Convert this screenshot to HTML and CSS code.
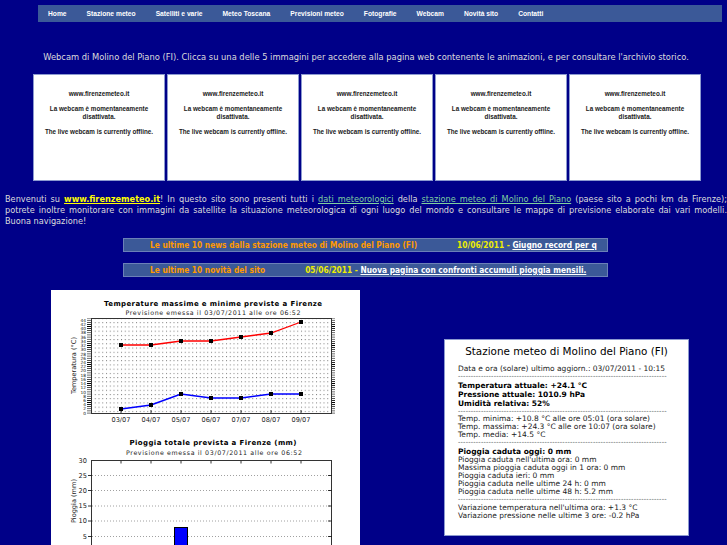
FILE: index.html
```html
<!DOCTYPE html>
<html lang="it">
<head>
<meta charset="utf-8">
<title>Firenze Meteo - Molino del Piano</title>
<link rel="stylesheet" href="styles.css">
</head>
<body>
<nav class="nav">
  <a class="nav-link" href="#">Home</a>
  <a class="nav-link" href="#">Stazione meteo</a>
  <a class="nav-link" href="#">Satelliti e varie</a>
  <a class="nav-link" href="#">Meteo Toscana</a>
  <a class="nav-link" href="#">Previsioni meteo</a>
  <a class="nav-link" href="#">Fotografie</a>
  <a class="nav-link" href="#">Webcam</a>
  <a class="nav-link" href="#">Novità sito</a>
  <a class="nav-link" href="#">Contatti</a>
</nav>

<p class="caption">Webcam di Molino del Piano (FI). Clicca su una delle 5 immagini per accedere alla pagina web contenente le animazioni, e per consultare l'archivio storico.</p>

<div class="cams">
  <div class="cam"><div>www.firenzemeteo.it</div><div class="cam-msg">La webcam è momentaneamente<br>disattivata.</div><div class="cam-msg">The live webcam is currently offline.</div></div>
  <div class="cam"><div>www.firenzemeteo.it</div><div class="cam-msg">La webcam è momentaneamente<br>disattivata.</div><div class="cam-msg">The live webcam is currently offline.</div></div>
  <div class="cam"><div>www.firenzemeteo.it</div><div class="cam-msg">La webcam è momentaneamente<br>disattivata.</div><div class="cam-msg">The live webcam is currently offline.</div></div>
  <div class="cam"><div>www.firenzemeteo.it</div><div class="cam-msg">La webcam è momentaneamente<br>disattivata.</div><div class="cam-msg">The live webcam is currently offline.</div></div>
  <div class="cam"><div>www.firenzemeteo.it</div><div class="cam-msg">La webcam è momentaneamente<br>disattivata.</div><div class="cam-msg">The live webcam is currently offline.</div></div>
</div>

<div class="welcome">
  <span class="wl">Benvenuti su <a class="site" href="#">www.firenzemeteo.it</a>! In questo sito sono presenti tutti i <a class="lnk" href="#">dati meteorologici</a> della <a class="lnk" href="#">stazione meteo di Molino del Piano</a> (paese sito a pochi km da Firenze);</span>
  <span class="wl">potrete inoltre monitorare con immagini da satellite la situazione meteorologica di ogni luogo del mondo e consultare le mappe di previsione elaborate dai vari modelli.</span>
  <span class="wl-last">Buona navigazione!</span>
</div>

<div class="news">
  <span class="news-title">Le ultime 10 news dalla stazione meteo di Molino del Piano (FI)</span>
  <span class="ticker"><span class="date">10/06/2011 - </span> <a href="#">Giugno record per q</a></span>
</div>
<div class="news">
  <span class="news-title">Le ultime 10 novità del sito</span>
  <span class="ticker"><span class="date">05/06/2011 - </span> <a href="#">Nuova pagina con confronti accumuli pioggia mensili.</a></span>
</div>

<div class="bottom">
  <div class="charts">
    <svg class="chart" width="309" height="262" viewBox="0 0 309 262">
      <defs>
        <pattern id="dots" x="40" y="28" width="3.75" height="4.222" patternUnits="userSpaceOnUse"><rect width="1" height="1" fill="#7a7a7a"/></pattern>
        <pattern id="ticks" x="0" y="27.7" width="4" height="2.111" patternUnits="userSpaceOnUse"><rect width="4" height="0.7" fill="#000"/></pattern>
      </defs>
      <text class="ct" x="162" y="15.5" text-anchor="middle" textLength="218">Temperature massime e minime previste a Firenze</text>
      <text class="cs" x="162" y="24.5" text-anchor="middle" textLength="175">Previsione emessa il 03/07/2011 alle ore 06:52</text>
      <rect x="40" y="28" width="240" height="95" fill="url(#dots)"/>
      <rect x="40.5" y="28.5" width="240" height="95" fill="none" stroke="#333"/>
      <rect x="36" y="28" width="4" height="96" fill="url(#ticks)"/>
      <rect x="281" y="28" width="3" height="96" fill="url(#ticks)"/>
      <path d="M70 123 v-3 M100 123 v-3 M130 123 v-3 M160 123 v-3 M190 123 v-3 M220 123 v-3 M250 123 v-3" stroke="#000" stroke-width="0.8"/>
      <g class="yl" text-anchor="end">
        <text x="35" y="124.6">0</text><text x="35" y="120.4">2</text><text x="35" y="116.2">4</text>
        <text x="35" y="111.9">6</text><text x="35" y="107.7">8</text>
        <text x="35" y="103.5">10</text><text x="35" y="99.3">12</text><text x="35" y="95">14</text>
        <text x="35" y="90.8">16</text><text x="35" y="86.6">18</text>
        <text x="35" y="82.4">20</text><text x="35" y="78.2">22</text><text x="35" y="73.9">24</text>
        <text x="35" y="69.7">26</text><text x="35" y="65.5">28</text>
        <text x="35" y="61.3">30</text><text x="35" y="57">32</text><text x="35" y="52.8">34</text>
        <text x="35" y="48.6">36</text><text x="35" y="44.4">38</text>
        <text x="35" y="40.2">40</text><text x="35" y="35.9">42</text><text x="35" y="31.7">44</text>
      </g>
      <polyline points="70,55 100,55 130,51 160,51 190,47 220,43 250,32" fill="none" stroke="#ff0000" stroke-width="1.3"/>
      <polyline points="70,119 100,115 130,104 160,108 190,108 220,104 250,104" fill="none" stroke="#0000ff" stroke-width="1.6"/>
      <g fill="#000">
        <rect x="68" y="53" width="4" height="4"/><rect x="98" y="53" width="4" height="4"/><rect x="128" y="49" width="4" height="4"/><rect x="158" y="49" width="4" height="4"/><rect x="188" y="45" width="4" height="4"/><rect x="218" y="41" width="4" height="4"/><rect x="248" y="30" width="4" height="4"/>
        <rect x="68" y="117" width="4" height="4"/><rect x="98" y="113" width="4" height="4"/><rect x="128" y="102" width="4" height="4"/><rect x="158" y="106" width="4" height="4"/><rect x="188" y="106" width="4" height="4"/><rect x="218" y="102" width="4" height="4"/><rect x="248" y="102" width="4" height="4"/>
      </g>
      <g class="ax" text-anchor="middle">
        <text x="70" y="131.5">03/07</text><text x="100" y="131.5">04/07</text><text x="130" y="131.5">05/07</text><text x="160" y="131.5">06/07</text><text x="190" y="131.5">07/07</text><text x="220" y="131.5">08/07</text><text x="250" y="131.5">09/07</text>
      </g>
      <text class="ax" text-anchor="middle" transform="translate(24.5 75.5) rotate(-90)">Temperatura (°C)</text>

      <text class="ct" x="162" y="155" text-anchor="middle" textLength="167">Pioggia totale prevista a Firenze (mm)</text>
      <text class="cs" x="163" y="165" text-anchor="middle" textLength="176">Previsione emessa il 03/07/2011 alle ore 06:52</text>
      <rect x="40.5" y="170.5" width="240" height="100" fill="none" stroke="#333"/>
      <path d="M41 185.5 H280 M41 200.5 H280 M41 216 H280 M41 231 H280 M41 246.5 H280" stroke="#888" stroke-width="0.8" stroke-dasharray="1 2"/>
      <path d="M70 171 v2.5 M100 171 v2.5 M130 171 v2.5 M160 171 v2.5 M190 171 v2.5 M220 171 v2.5 M250 171 v2.5 M37 185.5 h3.5 M37 200.5 h3.5 M37 216 h3.5 M37 231 h3.5 M37 246.5 h3.5 M277 185.5 h3.5 M277 200.5 h3.5 M277 216 h3.5 M277 231 h3.5 M277 246.5 h3.5" stroke="#000" stroke-width="0.8"/>
      <g class="ax" text-anchor="end">
        <text x="36" y="173">30</text><text x="36" y="187.6">25</text><text x="36" y="203">20</text><text x="36" y="218.3">15</text><text x="36" y="233.3">10</text><text x="36" y="248.8">5</text>
      </g>
      <text class="ax" text-anchor="middle" transform="translate(24.5 211) rotate(-90)">Pioggia (mm)</text>
      <rect x="123.5" y="237.5" width="13" height="40" fill="#0000ff" stroke="#000"/>
    </svg>
  </div>

  <div class="station">
    <div class="st-title">Stazione meteo di Molino del Piano (FI)</div>
    <div class="st-line st-first">Data e ora (solare) ultimo aggiorn.: 03/07/2011 - 10:15</div>
    <div class="st-dash">----------------------------------------------------------------------------------</div>
    <div class="st-bold st-gap">Temperatura attuale: +24.1 °C</div>
    <div class="st-bold">Pressione attuale: 1010.9 hPa</div>
    <div class="st-bold">Umidità relativa: 52%</div>
    <div class="st-dash">----------------------------------------------------------------------------------</div>
    <div class="st-line">Temp. minima: +10.8 °C alle ore 05:01 (ora solare)</div>
    <div class="st-line">Temp. massima: +24.3 °C alle ore 10:07 (ora solare)</div>
    <div class="st-line">Temp. media: +14.5 °C</div>
    <div class="st-dash">----------------------------------------------------------------------------------</div>
    <div class="st-bold st-gap">Pioggia caduta oggi: 0 mm</div>
    <div class="st-line">Pioggia caduta nell'ultima ora: 0 mm</div>
    <div class="st-line">Massima pioggia caduta oggi in 1 ora: 0 mm</div>
    <div class="st-line">Pioggia caduta ieri: 0 mm</div>
    <div class="st-line">Pioggia caduta nelle ultime 24 h: 0 mm</div>
    <div class="st-line">Pioggia caduta nelle ultime 48 h: 5.2 mm</div>
    <div class="st-dash">----------------------------------------------------------------------------------</div>
    <div class="st-line st-gap">Variazione temperatura nell'ultima ora: +1.3 °C</div>
    <div class="st-line">Variazione pressione nelle ultime 3 ore: -0.2 hPa</div>
  </div>
</div>
</body>
</html>
```

FILE: styles.css
```css
html, body {
  margin: 0;
  padding: 0;
  overflow: hidden;
}
body {
  background: #000088;
  width: 727px;
  height: 545px;
  font-family: "DejaVu Sans", sans-serif;
}

/* top navigation */
.nav {
  display: flex;
  align-items: center;
  margin: 5px 0 0 38px;
  width: 684px;
  height: 17px;
  background: #3b5998;
}
.nav-link {
  padding: 0 10px;
  font: bold 6.7px "Liberation Sans", Arial, sans-serif;
  color: #fff;
  text-decoration: none;
}

/* webcam caption */
.caption {
  margin: 29px 0 0;
  padding-left: 5px;
  height: 12px;
  text-align: center;
  font: 9.25px/12px "DejaVu Sans Condensed", "DejaVu Sans", sans-serif;
  color: #dcdcdc;
}

/* webcam boxes */
.cams {
  display: flex;
  gap: 2px;
  margin: 11px 0 0 33px;
}
.cam {
  width: 132px;
  height: 107px;
  box-sizing: border-box;
  border: 1px solid #8c9ad0;
  background: #fff;
  text-align: center;
  padding-top: 15px;
  font: bold 6.3px/8px "Liberation Sans", Arial, sans-serif;
  color: #1a1a1a;
}
.cam-msg {
  margin-top: 7px;
}

/* welcome text */
.welcome {
  margin: 13px 0 0 5px;
  width: 722px;
  font: 9.1px/11px "DejaVu Sans Condensed", "DejaVu Sans", sans-serif;
  color: #dcdcdc;
}
.wl {
  display: block;
  text-align: justify;
  text-align-last: justify;
}
.wl-last {
  display: block;
}
.site {
  color: #ffff00;
  font-weight: bold;
  text-decoration: underline;
}
.lnk {
  color: #7fcf9f;
  text-decoration: underline;
}

/* news bars */
.news {
  display: flex;
  align-items: center;
  margin: 11px 0 0 123px;
  width: 485px;
  height: 14px;
  box-sizing: border-box;
  border: 1px solid #6b80b8;
  background: #3b5998;
  padding: 0 5px 0 26px;
  font: bold 8.3px "DejaVu Sans Condensed", "DejaVu Sans", sans-serif;
  white-space: nowrap;
  overflow: hidden;
}
.news + .news {
  margin-top: 11px;
}
.news-title {
  color: #ff9900;
  margin-right: 40px;
}
.ticker {
  flex: 1;
  overflow: hidden;
}
.date {
  color: #eeee00;
}
.ticker a {
  color: #fff;
  text-decoration: underline;
}

/* bottom row */
.bottom {
  display: flex;
  align-items: flex-start;
  margin-top: 13px;
}
.charts {
  margin-left: 51px;
  width: 309px;
  height: 262px;
  background: #fff;
  overflow: hidden;
}
.chart {
  display: block;
}
.ct {
  font: bold 7px "DejaVu Sans", sans-serif;
  fill: #000;
}
.cs {
  font: 6.3px "DejaVu Sans", sans-serif;
  fill: #222;
}
.ax {
  font: 6.6px "DejaVu Sans", sans-serif;
  fill: #222;
}
.yl {
  font: 4.3px "DejaVu Sans", sans-serif;
  fill: #111;
}

/* station box */
.station {
  margin: 49px 0 0 84px;
  width: 245px;
  height: 197px;
  box-sizing: border-box;
  border: 1px solid #8c9ad0;
  background: #fff;
  padding: 4px 0 0 13px;
  color: #1a1a1a;
  font: 7.5px/8px "DejaVu Sans", sans-serif;
}
.st-title {
  margin-left: -13px;
  text-align: center;
  font-size: 10.4px;
  line-height: 14px;
  color: #000;
}
.st-line {
  height: 8px;
  white-space: nowrap;
}
.st-first {
  margin-top: 7px;
}
.st-bold {
  font-weight: bold;
  line-height: 9px;
  height: 9px;
  white-space: nowrap;
  color: #000;
}
.st-gap {
  margin-top: 1px;
}
.st-dash {
  height: 7px;
  line-height: 7px;
  white-space: nowrap;
  font-size: 6.5px;
  color: #444;
  letter-spacing: 0.2px;
}
```
